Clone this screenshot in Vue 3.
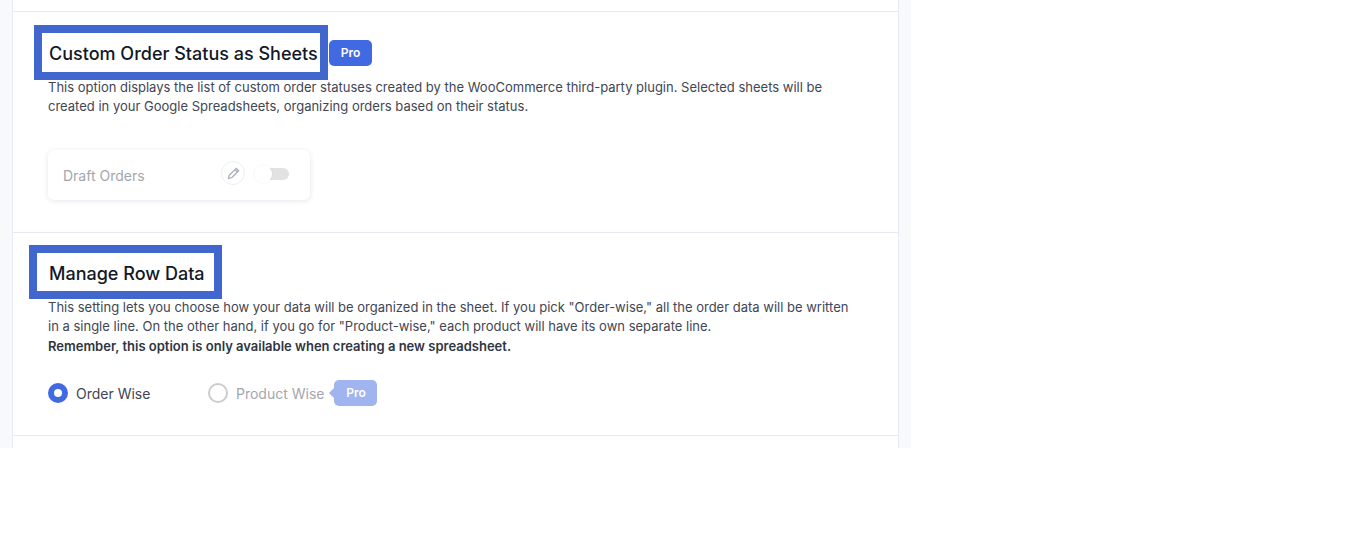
<script setup>
const statuses = [{ id: 'draft', label: 'Draft Orders' }]
</script>

<template>
  <div class="page">
    <div class="panel">
      <section class="setting first">
        <div class="title-row">
          <h3 class="title title-status">Custom Order Status as Sheets</h3>
          <span class="pro">Pro</span>
        </div>
        <p class="desc">
          This option displays the list of custom order statuses created by the WooCommerce third-party plugin. Selected sheets will be<br />
          created in your Google Spreadsheets, organizing orders based on their status.
        </p>
        <div class="cards">
          <div v-for="item in statuses" :key="item.id" class="card">
            <span class="card-label">{{ item.label }}</span>
            <span class="edit">
              <svg width="15" height="15" viewBox="0 0 24 24" fill="none" stroke="#a6abb9" stroke-width="2">
                <path d="M4 20l1.2-5L16.5 3.7l3.8 3.8L9 18.8 4 20z" />
                <path d="M14.5 5.7l3.8 3.8" />
              </svg>
            </span>
            <span class="toggle"><span class="knob"></span></span>
          </div>
        </div>
      </section>

      <section class="setting second">
        <h3 class="title title-row-data">Manage Row Data</h3>
        <p class="desc desc-wide">
          This setting lets you choose how your data will be organized in the sheet. If you pick "Order-wise," all the order data will be written<br />
          in a single line. On the other hand, if you go for "Product-wise," each product will have its own separate line.<br />
          <strong>Remember, this option is only available when creating a new spreadsheet.</strong>
        </p>
        <div class="radios">
          <label class="radio">
            <span class="dot checked"></span>
            <span>Order Wise</span>
          </label>
          <label class="radio disabled">
            <span class="dot"></span>
            <span>Product Wise</span>
            <span class="pro pro-faded">Pro</span>
          </label>
        </div>
      </section>
    </div>
  </div>
</template>

<style>
html,
body {
  background: #ffffff;
}
</style>

<style scoped>
.page {
  width: 911px;
  height: 448px;
  box-sizing: border-box;
  padding: 0 12px;
  background: #f8f9fb;
  font-family: Inter, "Liberation Sans", sans-serif;
  overflow: hidden;
}

.panel {
  height: 100%;
  box-sizing: border-box;
  padding-top: 11px;
  background: #ffffff;
  border-left: 1px solid #e6e9f1;
  border-right: 1px solid #e6e9f1;
}

.setting {
  border-top: 1px solid #e6e9f1;
  padding-left: 35px;
}

.first {
  height: 221px;
  box-sizing: border-box;
}

.second {
  height: 204px;
  box-sizing: border-box;
  border-bottom: 1px solid #e6e9f1;
}

.title-row {
  display: flex;
  align-items: center;
}

.title {
  margin: 0;
  border: 8px solid #4167cf;
  background: #ffffff;
  color: #111827;
  font-size: 18px;
  font-weight: 450;
  line-height: 22px;
  white-space: nowrap;
}

.title-status {
  width: 271px;
  margin: 13px 0 -2px -14px;
  padding: 10px 0 7px 7px;
}

.title-row-data {
  width: 165px;
  margin: 12px 0 0 -19px;
  padding: 10px 0 6px 12px;
}

.pro {
  display: inline-flex;
  align-items: center;
  justify-content: center;
  width: 43px;
  height: 26px;
  margin: 15px 0 0 1px;
  border-radius: 5px;
  background: #4169e1;
  color: #ffffff;
  font-size: 12px;
  font-weight: 600;
}

.desc {
  margin: 0;
  color: #414654;
  font-size: 13px;
  line-height: 19px;
  white-space: nowrap;
}

.desc-wide {
  margin-top: -1.5px;
  line-height: 19.5px;
}

.desc strong {
  font-weight: 600;
  color: #2f3542;
}

.cards {
  display: flex;
  margin-top: 34px;
}

.card {
  display: flex;
  align-items: center;
  width: 262px;
  height: 50px;
  box-sizing: border-box;
  padding-left: 15px;
  border-radius: 6px;
  background: #ffffff;
  box-shadow: 0 1px 5px rgba(40, 50, 90, 0.12);
}

.card-label {
  width: 158px;
  color: #a3a6ae;
  font-size: 14px;
}

.edit {
  display: flex;
  align-items: center;
  justify-content: center;
  width: 22px;
  height: 22px;
  margin-bottom: 4px;
  border: 1px solid #eceef3;
  border-radius: 50%;
}

.toggle {
  position: relative;
  width: 35px;
  height: 12px;
  margin: 0 0 2px 9px;
  border-radius: 6px;
  background: #e2e2e2;
}

.knob {
  position: absolute;
  left: 0;
  top: -3px;
  width: 18px;
  height: 18px;
  border-radius: 50%;
  background: #ffffff;
  box-shadow: 0 0 2px rgba(40, 50, 90, 0.08);
}

.radios {
  display: flex;
  align-items: center;
  margin-top: 24.5px;
}

.radio {
  display: flex;
  align-items: center;
  gap: 8px;
  width: 160px;
  color: #414654;
  font-size: 14px;
}

.radio.disabled {
  color: #a3a6ae;
  width: auto;
}

.dot {
  width: 20px;
  height: 20px;
  box-sizing: border-box;
  border: 2px solid #cccccc;
  border-radius: 50%;
  background: #ffffff;
}

.dot.checked {
  border: 6px solid #4169e1;
}

.pro-faded {
  position: relative;
  margin: -1px 0 0 2px;
  background: #a0b4ef;
}

.pro-faded::before {
  content: "";
  position: absolute;
  left: -5px;
  top: 8px;
  border-top: 5px solid transparent;
  border-bottom: 5px solid transparent;
  border-right: 5px solid #a0b4ef;
}
</style>
